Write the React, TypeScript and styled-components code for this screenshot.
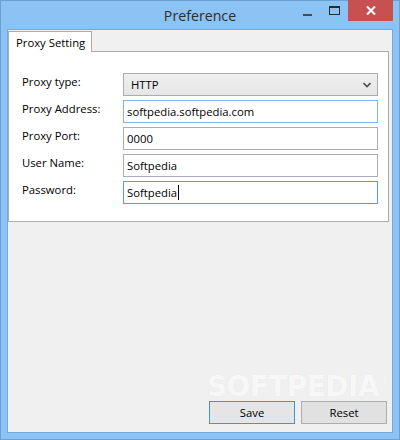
import { FC } from 'react';
import styled, { createGlobalStyle } from 'styled-components';

// ----------------------------------------------------------------------------

const GlobalStyle = createGlobalStyle`
  html, body {
    margin: 0;
    padding: 0;
    background: #ffffff;
  }

  body {
    font-family: 'Open Sans', 'Noto Sans', sans-serif;
    font-size: 11.3px;
    color: #000000;
  }
`;

const fields = [
  { label: 'Proxy Address:', value: 'softpedia.softpedia.com', focus: 'hover' },
  { label: 'Proxy Port:', value: '0000', focus: 'none' },
  { label: 'User Name:', value: 'Softpedia', focus: 'none' },
  { label: 'Password:', value: 'Softpedia', focus: 'active' },
] as const;

// ----------------------------------------------------------------------------

const Window = styled.div`
  width: 400px;
  height: 440px;
  box-sizing: border-box;
  border: 1px solid #6e9fd2;
  background: #8bc3f4;
  display: flex;
  flex-direction: column;
  padding: 0 6px 6px 6px;
`;

const TitleBar = styled.div`
  height: 28px;
  display: grid;
  grid-template-columns: 1fr auto 1fr;
  align-items: start;
`;

const Title = styled.div`
  grid-column: 2;
  font-family: 'Open Sans', 'Noto Sans', sans-serif;
  font-size: 14.2px;
  line-height: 20px;
  padding-top: 5px;
  color: #2e2e2e;
`;

const Controls = styled.div`
  grid-column: 3;
  justify-self: end;
  display: flex;
  align-items: flex-start;
  margin-top: -1px;
`;

const CaptionButton = styled.div<{ $close?: boolean }>`
  height: 21px;
  width: ${(p) => (p.$close ? '45px' : '27px')};
  display: flex;
  align-items: center;
  justify-content: center;
  background: ${(p) => (p.$close ? '#c75050' : 'transparent')};
`;

const Client = styled.div`
  flex: 1;
  border: 1px solid #73a8dc;
  background: #f0f0f0;
  display: flex;
  flex-direction: column;
  position: relative;
`;

const TabStrip = styled.div`
  display: flex;
  margin-top: 1px;
  margin-right: 3px;
`;

const Tab = styled.div`
  background: #ffffff;
  border: 1px solid #acacac;
  border-bottom: none;
  height: 21px;
  width: 84px;
  box-sizing: border-box;
  padding-left: 7px;
  line-height: 21px;
  color: #000;
  position: relative;
  z-index: 1;
  margin-bottom: -1px;
`;

const TabPanel = styled.div`
  margin-right: 3px;
  background: #ffffff;
  border: 1px solid #acacac;
  height: 171px;
  box-sizing: border-box;
  padding: 21px 10px 0 13px;
  display: flex;
  flex-direction: column;
  gap: 4px;
`;

const Row = styled.div`
  display: grid;
  grid-template-columns: 101px 1fr;
  align-items: start;
`;

const Label = styled.div`
  line-height: 16px;
  padding-top: 1px;
  color: #000;
`;

const Field = styled.div<{ $state: 'none' | 'hover' | 'active' }>`
  height: 23px;
  box-sizing: border-box;
  border: 1px solid
    ${(p) =>
      p.$state === 'hover' ? '#7eb4ea' : p.$state === 'active' ? '#569de5' : '#abadb3'};
  background: #ffffff;
  padding: 0 3px;
  display: flex;
  align-items: center;
  color: #000;
`;

const Select = styled.div`
  height: 23px;
  box-sizing: border-box;
  border: 1px solid #acacac;
  background: linear-gradient(#f0f0f0, #e5e5e5);
  padding: 0 6px 0 7px;
  display: flex;
  align-items: center;
  justify-content: space-between;
  color: #000;
`;

const Caret = styled.span`
  display: inline-block;
  width: 1px;
  height: 15px;
  background: #000;
  margin-left: 1px;
`;

const Spacer = styled.div`
  flex: 1;
`;

const Footer = styled.div`
  display: flex;
  justify-content: flex-end;
  gap: 6px;
  padding: 0 5px 8px 0;
`;

const Button = styled.div<{ $default?: boolean }>`
  width: 86px;
  height: 23px;
  box-sizing: border-box;
  border: 1px solid ${(p) => (p.$default ? '#3c94e8' : '#acacac')};
  background: ${(p) => (p.$default ? '#e5e5e5' : '#e1e1e1')};
  display: flex;
  align-items: center;
  justify-content: center;
  color: #000;
`;

const Watermark = styled.div`
  position: absolute;
  left: 199px;
  bottom: 31px;
  font-family: 'DejaVu Sans', sans-serif;
  font-weight: bold;
  font-size: 28px;
  line-height: 1;
  letter-spacing: -0.6px;
  color: rgba(255, 255, 255, 0.8);
  text-shadow: 0 0 1px rgba(0, 0, 0, 0.08);
  pointer-events: none;

  sup {
    font-size: 9px;
    font-weight: normal;
    vertical-align: 14px;
    margin-left: 2px;
  }
`;

// ----------------------------------------------------------------------------

const App: FC = () => {
  return (
    <>
      <GlobalStyle />
      <Window>
        <TitleBar>
          <Title>Preference</Title>
          <Controls>
            <CaptionButton>
              <svg width="10" height="12" viewBox="0 0 10 12">
                <rect x="0" y="9" width="9" height="2" fill="#4a4a4a" />
              </svg>
            </CaptionButton>
            <CaptionButton>
              <svg width="12" height="10" viewBox="0 0 12 10">
                <rect x="0.5" y="0.5" width="10" height="8" fill="none" stroke="#2b2b2b" />
                <rect x="0" y="0" width="11" height="2" fill="#2b2b2b" />
              </svg>
            </CaptionButton>
            <CaptionButton $close>
              <svg width="10" height="9" viewBox="0 0 10 9">
                <path d="M1 0.5 L9 8.5 M9 0.5 L1 8.5" stroke="#ffffff" strokeWidth="2" />
              </svg>
            </CaptionButton>
          </Controls>
        </TitleBar>
        <Client>
          <TabStrip>
            <Tab>Proxy Setting</Tab>
          </TabStrip>
          <TabPanel>
            <Row>
              <Label>Proxy type:</Label>
              <Select>
                <span>HTTP</span>
                <svg width="8" height="6" viewBox="0 0 8 6">
                  <path d="M0.5 1 L4 4.5 L7.5 1" fill="none" stroke="#505050" strokeWidth="1.6" />
                </svg>
              </Select>
            </Row>
            {fields.map((f) => (
              <Row key={f.label}>
                <Label>{f.label}</Label>
                <Field $state={f.focus}>
                  {f.value}
                  {f.focus === 'active' && <Caret />}
                </Field>
              </Row>
            ))}
          </TabPanel>
          <Spacer />
          <Footer>
            <Button $default>Save</Button>
            <Button>Reset</Button>
          </Footer>
          <Watermark>
            SOFTPEDIA<sup>®</sup>
          </Watermark>
        </Client>
      </Window>
    </>
  );
};

export default App;
